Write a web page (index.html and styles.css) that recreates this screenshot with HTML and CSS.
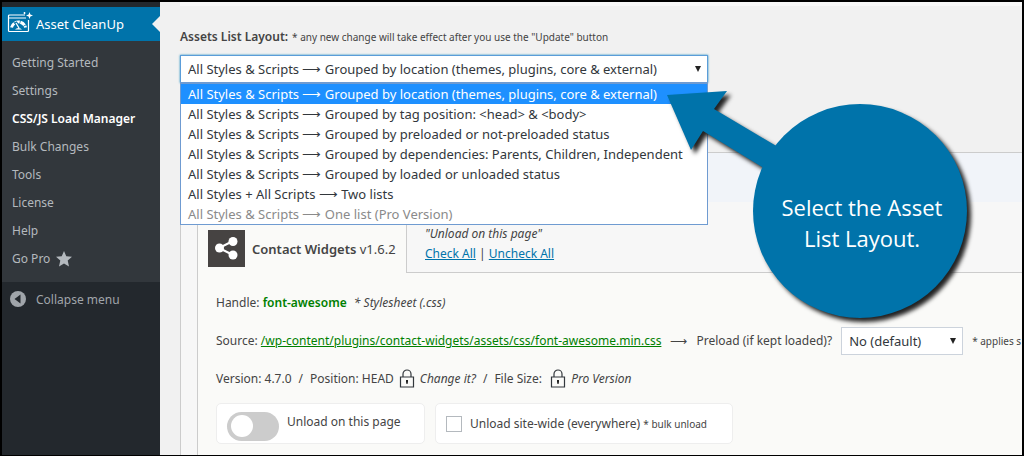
FILE: index.html
```html
<!DOCTYPE html>
<html lang="en">
<head>
  <meta charset="UTF-8">
  <meta name="viewport" content="width=device-width, initial-scale=1.0">
  <title>Asset CleanUp - CSS/JS Load Manager</title>
  <link rel="stylesheet" href="styles.css">
</head>
<body>
  <nav class="sidebar">
    <a href="#" class="menu-top">
      <svg class="menu-icon" width="26" height="22" viewBox="0 0 26 22" fill="none" stroke="#fff">
        <path d="M18 4H2.500a1 1 0 0 0-1 1v14.500a1 1 0 0 0 1 1h18a1 1 0 0 0 1-1V9" stroke-width="1.200"/>
        <path d="M1.500 7H19" stroke-width="1"/>
        <path d="M4.500 16.500a7.200 7.200 0 0 1 14 0" stroke-width="3" stroke-dasharray="5 .7"/>
        <path d="M8.500 11l3.500 5.500" stroke="#0073aa" stroke-width="3"/>
        <path d="M9 12l3 5" stroke-width="1.300"/>
        <path d="M8 18.500a4 3 0 0 1 7 0z" fill="#fff" stroke="none"/>
        <path d="M22.500 1l.9 2.600 2.600.9-2.600.9-.9 2.600-.9-2.600-2.600-.9 2.600-.9z" fill="#fff" stroke="none"/>
        <path d="M17.500 1v2M16.500 2h2" stroke-width="1"/>
      </svg>
      Asset CleanUp
    </a>
    <ul class="submenu">
      <li><a href="#">Getting Started</a></li>
      <li><a href="#">Settings</a></li>
      <li><a href="#" class="current">CSS/JS Load Manager</a></li>
      <li><a href="#">Bulk Changes</a></li>
      <li><a href="#">Tools</a></li>
      <li><a href="#">License</a></li>
      <li><a href="#">Help</a></li>
      <li><a href="#">Go Pro
        <svg width="16" height="16" viewBox="0 0 16 16"><path d="M8 0l2.300 5.300 5.700.5-4.300 3.800 1.300 5.900-5-3.100-5 3.100 1.300-5.900L0 5.800l5.700-.5z" fill="#b4b9be"/></svg>
      </a></li>
    </ul>
    <button type="button" class="collapse">
      <svg width="16" height="16" viewBox="0 0 16 16"><circle cx="8" cy="8" r="8" fill="#a0a5aa"/><path d="M10.500 3.500v9L4.500 8z" fill="#23282d"/></svg>
      Collapse menu
    </button>
  </nav>

  <main class="content">
    <div class="top-strip"></div>
    <div class="layout-label">
      <label for="assets-layout">Assets List Layout:</label>
      <small>* any new change will take effect after you use the "Update" button</small>
    </div>
    <div class="layout-select">
      <select id="assets-layout">
        <option>All Styles &amp; Scripts ⟶ Grouped by location (themes, plugins, core &amp; external)</option>
      </select>
      <ul class="options" role="listbox" aria-label="Assets List Layout">
        <li role="option" aria-selected="true" class="selected">All Styles &amp; Scripts ⟶ Grouped by location (themes, plugins, core &amp; external)</li>
        <li role="option">All Styles &amp; Scripts ⟶ Grouped by tag position: &lt;head&gt; &amp; &lt;body&gt;</li>
        <li role="option">All Styles &amp; Scripts ⟶ Grouped by preloaded or not-preloaded status</li>
        <li role="option">All Styles &amp; Scripts ⟶ Grouped by dependencies: Parents, Children, Independent</li>
        <li role="option">All Styles &amp; Scripts ⟶ Grouped by loaded or unloaded status</li>
        <li role="option">All Styles + All Scripts ⟶ Two lists</li>
        <li role="option" aria-disabled="true" class="disabled">All Styles &amp; Scripts ⟶ One list (Pro Version)</li>
      </ul>
    </div>

    <section class="panel">
      <div class="panel-header"></div>
      <div class="plugin">
        <div class="plugin-head">
          <div class="plugin-tab">
            <svg width="37" height="37" viewBox="0 0 37 37">
              <path fill="#464342" d="M0 0h37v37H0z"/>
              <path d="M25 11L11 18l14 7" fill="none" stroke="#fff" stroke-width="2"/>
              <g fill="#fff"><circle cx="25" cy="11.500" r="4.500"/><circle cx="11.500" cy="18" r="4.500"/><circle cx="25" cy="25" r="4.500"/></g>
            </svg>
            <div><strong>Contact Widgets</strong> v1.6.2</div>
          </div>
          <div class="plugin-actions">
            <em>"Unload on this page"</em>
            <div><a href="#">Check All</a> | <a href="#">Uncheck All</a></div>
          </div>
        </div>
        <div class="asset">
          <div class="row">Handle: <strong class="handle">font-awesome</strong> <em class="type">* Stylesheet (.css)</em></div>
          <div class="row source">
            <div>Source: <a href="#" class="path">/wp-content/plugins/contact-widgets/assets/css/font-awesome.min.css</a></div>
            <span>⟶</span>
            <label for="preload">Preload (if kept loaded)?</label>
            <div class="preload-select">
              <select id="preload"><option>No (default)</option></select>
            </div>
            <small>* applies s</small>
          </div>
          <div class="row meta">
            <span>Version: 4.7.0</span><span>/</span>
            <span class="pro">Position: HEAD
              <svg class="lock" width="16" height="19" viewBox="0 0 16 19"><path d="M1.500 8h13v10h-13zM4 8V5a4 4 0 0 1 8 0v3" fill="none" stroke="#32373c" stroke-width="1.200"/><path d="M7 11h2v2l-.5 2h-1L7 13z" fill="#222"/></svg>
              <em>Change it?</em></span><span>/</span>
            <span class="pro">File Size:&nbsp;
              <svg class="lock" width="16" height="19" viewBox="0 0 16 19"><path d="M1.500 8h13v10h-13zM4 8V5a4 4 0 0 1 8 0v3" fill="none" stroke="#32373c" stroke-width="1.200"/><path d="M7 11h2v2l-.5 2h-1L7 13z" fill="#222"/></svg>
              <em>Pro Version</em></span>
          </div>
          <div class="row unload">
            <label class="box page"><input type="checkbox" class="switch"> Unload on this page</label>
            <label class="box site"><input type="checkbox" class="check"> <span>Unload site-wide (everywhere) <small>* bulk unload</small></span></label>
          </div>
        </div>
      </div>
    </section>
  </main>

  <aside class="callout">
    <svg width="330" height="250" viewBox="0 0 330 250" fill="#0073aa">
      <path d="M7 15L67 11 54 29 130 74 115 95 43 51 31 70z"/>
      <circle cx="200" cy="131" r="107"/>
    </svg>
    <p>Select the Asset<br>List Layout.</p>
  </aside>
</body>
</html>
```
FILE: styles.css
```css
* {
  box-sizing: border-box;
}
body {
  position: relative;
  display: flex;
  min-height: 100vh;
  margin: 0;
  border: 2px solid #000;
  overflow: hidden;
  background: #f1f1f1;
  color: #444;
  font-family: "Noto Sans", "Open Sans", sans-serif;
  font-size: 12px;
  line-height: 20px;
}
ul {
  list-style: none;
  margin: 0;
  padding: 0;
}
small {
  font-size: 10px;
}
strong {
  font-weight: 600;
}
select {
  appearance: none;
  width: 100%;
  height: 28px;
  margin: 0;
  padding: 0 7px;
  border: 1px solid #ccd3dc;
  border-radius: 0;
  background: #fff;
  color: #32373c;
  font-family: inherit;
  font-size: 13px;
}

/* sidebar */
.sidebar {
  flex: 0 0 158px;
  padding-top: 5px;
  background: #23282d;
}
.menu-top {
  position: relative;
  display: flex;
  align-items: center;
  gap: 3px;
  height: 34px;
  padding-left: 5px;
  background: #0073aa;
  color: #fff;
  font-size: 13px;
  text-decoration: none;
}
.menu-top::after {
  content: "";
  position: absolute;
  right: 0;
  top: 9px;
  border: 8px solid transparent;
  border-right-color: #f1f1f1;
  border-left: 0;
}
.menu-icon {
  margin-bottom: 4px;
}
.submenu {
  padding: 8px 0 9px;
  background: #32373c;
}
.submenu a {
  display: flex;
  align-items: center;
  gap: 6px;
  height: 28px;
  padding-left: 10px;
  color: #b4b9be;
  text-decoration: none;
}
.submenu .current {
  color: #fff;
  font-weight: 600;
}
.collapse {
  display: flex;
  align-items: center;
  gap: 10px;
  height: 34px;
  padding: 0 8px;
  border: 0;
  background: none;
  color: #a0a5aa;
  font-family: inherit;
  font-size: 12px;
}

/* content */
.content {
  flex: 1;
  min-width: 0;
  display: flex;
  flex-direction: column;
  padding-left: 20px;
  white-space: nowrap;
}
.top-strip {
  height: 4px;
  background: #f8f8f8;
}
.layout-label {
  display: flex;
  gap: 4px;
  padding: 21px 0 8px;
}
.layout-label label {
  font-weight: 600;
}
.layout-select {
  position: relative;
  width: 528px;
}
.layout-select select {
  border-color: #5b9dd9;
  box-shadow: 0 0 2px #1e8cbe;
}
.layout-select::after,
.preload-select::after {
  content: "";
  position: absolute;
  top: 11px;
  right: 7px;
  border: 3px solid transparent;
  border-top: 6px solid #222;
  border-bottom: 0;
}
.options {
  position: absolute;
  z-index: 2;
  top: 27px;
  left: 0;
  right: 0;
  border: 1px solid #6f9bd1;
  border-top-width: 2px;
  background: #fff;
  color: #32373c;
  font-size: 13px;
}
.options li {
  padding-left: 7px;
}
.options .selected {
  background: #1e90ff;
  color: #fff;
}
.options .disabled {
  color: #8a8a8a;
}
.panel {
  flex: 1;
  margin-top: 69px;
  border: solid #ccc;
  border-width: 1px 0 0 1px;
  background: #f7f7f7;
  display: flex;
  flex-direction: column;
}
.panel-header {
  height: 49px;
  background: #f1f4f9;
}
.plugin {
  flex: 1;
  display: flex;
  flex-direction: column;
  margin: 17px 0 0 16px;
}
.plugin-head {
  display: flex;
}
.plugin-tab {
  display: flex;
  align-items: center;
  gap: 7px;
  width: 210px;
  padding: 10px 0 6px 10px;
  border: solid #ccc;
  border-width: 1px 1px 0;
  background: #fafaf8;
  font-size: 13px;
}
.plugin-actions {
  flex: 1;
  padding: 5px 18px 7px;
  border-bottom: 1px solid #ccc;
}
.plugin-actions a {
  color: #0073aa;
}
.asset {
  flex: 1;
  display: flex;
  flex-direction: column;
  gap: 14px;
  padding: 20px 0 11px 18px;
  border-left: 1px solid #ccc;
  background: #fafaf8;
}
.handle,
.path {
  color: #008000;
}
.type {
  margin-left: 4px;
}
.source {
  display: flex;
  align-items: center;
  gap: 9px;
}
.preload-select {
  position: relative;
  flex: 0 0 122px;
}
.meta {
  display: flex;
  gap: 7px;
}
.pro {
  display: flex;
  gap: 5px;
}
.unload {
  display: flex;
  gap: 10px;
}
.box {
  display: flex;
  align-items: center;
  height: 41px;
  border: 1px solid #eee;
  border-radius: 5px;
  background: #fff;
}
.page {
  align-items: flex-start;
  width: 209px;
  padding: 8px 10px;
  gap: 8px;
}
.site {
  width: 298px;
  padding: 0 10px;
  gap: 8px;
}
.switch {
  appearance: none;
  width: 52px;
  height: 29px;
  margin: 0;
  padding: 3px 4px;
  border-radius: 15px;
  background: #ccc;
}
.switch::before {
  content: "";
  display: block;
  width: 22px;
  height: 22px;
  border-radius: 50%;
  background: #fff;
}
.check {
  appearance: none;
  width: 16px;
  height: 16px;
  margin: 0;
  border: 1px solid #b4b9be;
  background: #fff;
}

/* arrow pointing at the open list */
.callout {
  position: absolute;
  z-index: 3;
  top: 78px;
  left: 658px;
}
.callout svg {
  display: block;
  filter: drop-shadow(4px 4px 2px #222);
}
.callout p {
  position: absolute;
  top: 112px;
  left: 95px;
  width: 214px;
  margin: 0;
  color: #fff;
  font-family: "Open Sans", "Noto Sans", sans-serif;
  font-size: 22px;
  line-height: 31px;
  text-align: center;
}
```
